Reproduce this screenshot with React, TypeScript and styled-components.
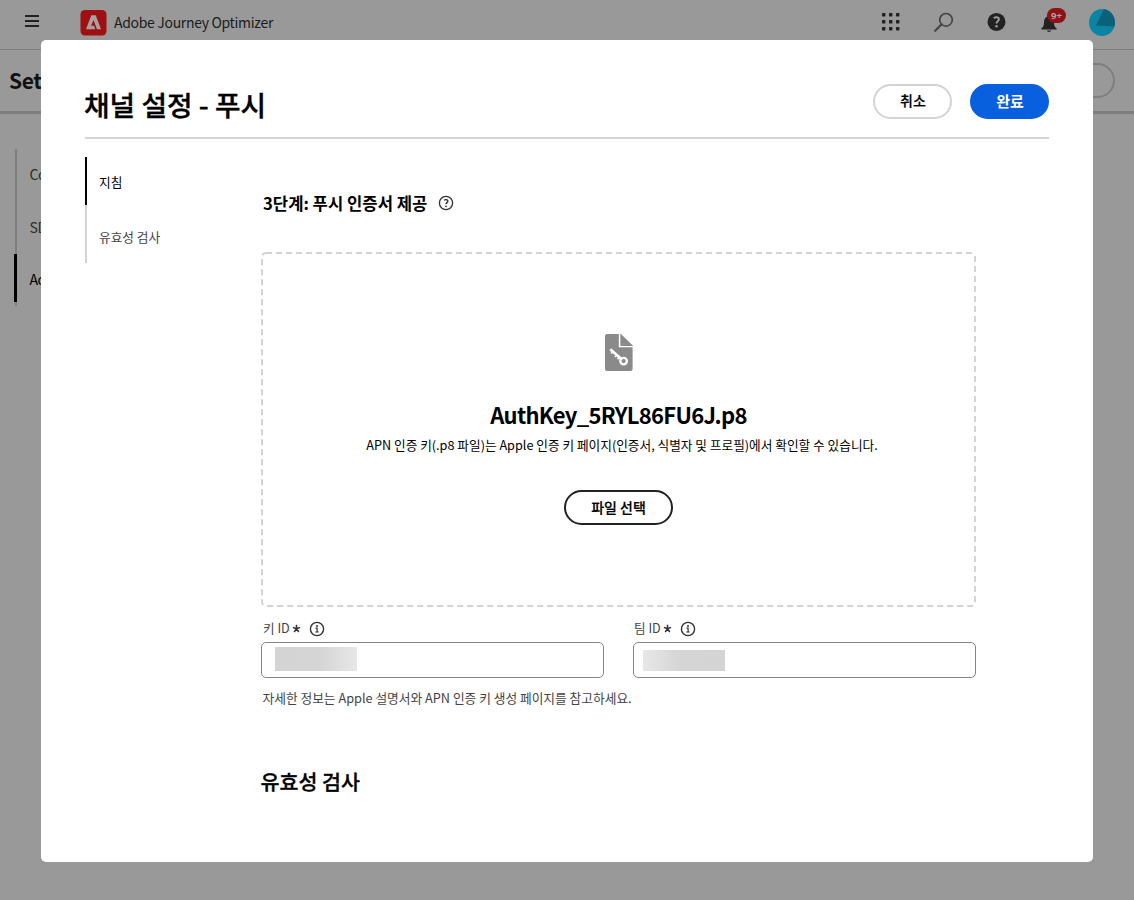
import React from "react";
import styled, { createGlobalStyle } from "styled-components";

const GlobalStyle = createGlobalStyle`
  * { box-sizing: border-box; }
  html, body, #root { height: 100%; }
  body {
    margin: 0;
    overflow: hidden;
    background: #999;
    font-family: "Noto Sans CJK KR", "Noto Sans", sans-serif;
  }
  h1, h2, h3, p { margin: 0; }
  svg { display: block; flex: none; }
  button { font-family: inherit; padding: 0; }
`;

const Page = styled.div`
  position: relative;
  width: 1134px;
  height: 900px;
  overflow: hidden;
  background: #999;
`;

const TopBar = styled.header`
  display: flex;
  align-items: flex-start;
  height: 50px;
  padding: 0 19px 0 25px;
  border-bottom: 1px solid #7d7d7d;
`;

const Slot = styled.div<{ $top: number; $left?: number }>`
  margin-top: ${(p) => p.$top}px;
  margin-left: ${(p) => p.$left ?? 0}px;
`;

const ProductName = styled.span`
  margin: 10px auto 0 7px;
  font-size: 14px;
  line-height: 24px;
  letter-spacing: -0.32px;
  color: #1c1c1c;
  white-space: nowrap;
`;

const Bell = styled.div`
  position: relative;
  margin: 15px 0 0 35px;
`;

const Badge = styled.span`
  position: absolute;
  left: 6px;
  top: -7px;
  width: 19px;
  height: 15px;
  border-radius: 8px;
  background: #8e1216;
  color: #b5a5a5;
  font-family: "Open Sans", sans-serif;
  font-size: 9.5px;
  font-weight: 700;
  line-height: 15px;
  text-align: center;
`;

const SubHeader = styled.div`
  display: flex;
  justify-content: space-between;
  height: 64px;
  padding: 13px 19px 0 9px;
  border-bottom: 3px solid #7e7e7e;
`;

const SubTitle = styled.h2`
  font-size: 21px;
  line-height: 34px;
  font-weight: 700;
  letter-spacing: -0.4px;
  color: #111;
`;

const GhostPill = styled.div`
  width: 80px;
  height: 35px;
  border: 2px solid #7e7e7e;
  border-radius: 18px;
`;

const SideNav = styled.nav`
  width: 100px;
  height: 157px;
  margin: 35px 0 0 14px;
  display: flex;
`;

const SideTrack = styled.div`
  width: 3px;
  display: flex;
  flex-direction: column;
  align-items: flex-end;
`;

const SideSegment = styled.i<{ $h: number; $active?: boolean }>`
  width: ${(p) => (p.$active ? 3 : 2)}px;
  height: ${(p) => p.$h}px;
  background: ${(p) => (p.$active ? "#000" : "#7e7e7e")};
`;

const SideItems = styled.div`
  padding: 0 0 0 12.5px;
`;

const SideItem = styled.div<{ $active?: boolean }>`
  height: 52.5px;
  line-height: 50px;
  font-size: 14px;
  letter-spacing: -0.4px;
  color: ${(p) => (p.$active ? "#000" : "#2b2b2b")};
`;

const Dialog = styled.section`
  position: absolute;
  left: 41px;
  top: 40px;
  width: 1052px;
  height: 822px;
  padding: 44px 44px 0;
  border-radius: 5px;
  background: #fff;
  color: #000;
`;

const DialogHeader = styled.header`
  display: flex;
  align-items: flex-start;
  height: 55px;
  border-bottom: 2px solid #d3d3d3;
`;

const Title = styled.h1`
  flex: 1;
  margin-left: -1px;
  font-size: 27.8px;
  line-height: 40px;
  font-weight: 500;
  -webkit-text-stroke: 0.35px #000;
`;

const Pill = styled.button<{ $w: number; $kind: "quiet" | "primary" | "outline"; $size: number }>`
  width: ${(p) => p.$w}px;
  height: 35px;
  border-radius: 18px;
  border: 2px solid
    ${(p) => (p.$kind === "primary" ? "#0860de" : p.$kind === "quiet" ? "#d3d3d3" : "#222")};
  background: ${(p) => (p.$kind === "primary" ? "#0860de" : "#fff")};
  color: ${(p) => (p.$kind === "primary" ? "#fff" : "#000")};
  font-size: ${(p) => p.$size}px;
  line-height: 29px;
  padding: 0 0 ${(p) => (p.$kind === "outline" ? 1 : 2)}px ${(p) => (p.$kind === "outline" ? 0 : 1)}px;
  font-weight: ${(p) => (p.$kind === "primary" ? 700 : 500)};
  -webkit-text-stroke: ${(p) => (p.$kind === "primary" ? 0 : 0.2)}px #000;
`;

const Actions = styled.div`
  display: flex;
  gap: 18px;
`;

const Body = styled.div`
  display: flex;
  padding-top: 18px;
`;

const Steps = styled.nav`
  width: 176px;
`;

const Step = styled.div<{ $active?: boolean; $h: number; $line: number }>`
  height: ${(p) => p.$h}px;
  padding-left: 12px;
  border-left: 2px solid ${(p) => (p.$active ? "#000" : "#d3d3d3")};
  color: ${(p) => (p.$active ? "#000" : "#444")};
  font-size: 12.7px;
  line-height: ${(p) => p.$line}px;
`;

const Content = styled.main`
  width: 715px;
`;

const StepHeading = styled.div`
  display: flex;
  align-items: flex-start;
  gap: 11px;
  padding: 33px 0 0 2px;
  height: 95px;
`;

const StepTitle = styled.h3`
  font-size: 16.65px;
  line-height: 26px;
  font-weight: 700;
`;

const DropFrame = styled.div`
  display: grid;
  width: 715px;
  height: 355px;
`;

const DropOutline = styled.svg`
  grid-area: 1 / 1;
`;

const DropContent = styled.div`
  grid-area: 1 / 1;
  display: flex;
  flex-direction: column;
  align-items: center;
  padding-top: 81px;
`;

const FileName = styled.h2`
  margin-top: 26px;
  font-size: 22px;
  line-height: 34px;
  font-weight: 700;
  letter-spacing: -0.72px;
  white-space: nowrap;
`;

const Hint = styled.p`
  margin: 4px 0 35px 7px;
  font-size: 12.68px;
  line-height: 20px;
  white-space: nowrap;
`;

const Fields = styled.div`
  display: flex;
  gap: 29px;
  padding-top: 11px;
`;

const Field = styled.div`
  width: 343px;
`;

const Label = styled.div<{ $left: number }>`
  display: flex;
  align-items: center;
  height: 20px;
  padding-left: ${(p) => p.$left}px;
  font-size: 12.6px;
  line-height: 20px;
  color: #444;
`;

const Required = styled.svg`
  margin: 0 8px 0 2px;
`;

const Input = styled.div<{ $left: number; $top: number }>`
  height: 36px;
  margin-top: 4px;
  padding: ${(p) => p.$top}px 0 0 ${(p) => p.$left}px;
  border: 1px solid #858585;
  border-radius: 5px;
`;

const Redaction = styled.div<{ $h: number; $flip?: boolean }>`
  width: 82px;
  height: ${(p) => p.$h}px;
  background: linear-gradient(
    ${(p) => (p.$flip ? "to left" : "to right")},
    #d4d4d4,
    #d5d5d5 55%,
    #e7e7e7
  );
`;

const Help = styled.p`
  margin: 10px 0 0 1.5px;
  font-size: 12.72px;
  line-height: 20px;
  color: #444;
  white-space: nowrap;
`;

const NextHeading = styled.h2`
  margin: 58px 0 0 -0.5px;
  font-size: 20.6px;
  line-height: 30px;
  font-weight: 500;
  -webkit-text-stroke: 0.3px #000;
`;

const Asterisk = () => (
  <Required width="9" height="9" viewBox="0 0 9 9">
    <path d="M4.5 4.7V.8M4.5 4.7L8.1 3.4M4.5 4.7L6.8 8M4.5 4.7L2.2 8M4.5 4.7L.9 3.4" stroke="#333" strokeWidth="1.5" fill="none" />
  </Required>
);

const InfoIcon = () => (
  <svg width="16" height="17" viewBox="0 0 16 17">
    <circle cx="8" cy="9" r="6.6" fill="none" stroke="#333" strokeWidth="1.4" />
    <circle cx="8" cy="5.9" r="1" fill="#333" />
    <path d="M6.5 8.2H8.1V12M6.3 12H9.7" fill="none" stroke="#333" strokeWidth="1.2" />
  </svg>
);

const HelpIcon = () => (
  <svg width="16" height="16" viewBox="0 0 16 16">
    <circle cx="8" cy="8" r="6.6" fill="none" stroke="#333" strokeWidth="1.3" />
    <path d="M6 5.3C7.5 4.2 10 4.5 9.9 6.3C9.9 7.5 8 7.8 8 9.3" fill="none" stroke="#333" strokeWidth="1.4" />
    <circle cx="8" cy="11.3" r=".9" fill="#333" />
  </svg>
);

const MenuIcon = () => (
  <svg width="14" height="12" viewBox="0 0 14 12">
    <path d="M0 1.1H14M0 6H14M0 10.9H14" stroke="#222" strokeWidth="2" />
  </svg>
);

const AdobeLogo = () => (
  <svg width="27" height="26" viewBox="0 0 27 26">
    <rect x=".5" width="26" height="25.5" rx="4.5" fill="#a01013" />
    <path d="M11.3 5.2H15.7L21 19.2H17L13.5 9.9L11.1 15.7H14L15.2 19.2H6Z" fill="#a9a0a0" />
  </svg>
);

const AppsIcon = () => (
  <svg width="18" height="18" viewBox="0 0 18 18" fill="#222">
    {[0, 7, 14].map((y) => [0, 7, 14].map((x) => <rect key={`${x}-${y}`} x={x} y={y} width="3.4" height="3.4" rx=".6" />))}
  </svg>
);

const SearchIcon = () => (
  <svg width="20" height="20" viewBox="0 0 20 20" fill="none" stroke="#444" strokeWidth="1.7">
    <circle cx="12" cy="7.8" r="6.3" />
    <path d="M7.6 12.3L1.2 18.7" strokeWidth="2.2" strokeLinecap="round" />
  </svg>
);

const HelpSolidIcon = () => (
  <svg width="19" height="19" viewBox="0 0 19 19">
    <circle cx="9.5" cy="9.9" r="9" fill="#222" />
    <path d="M6.8 6.2C8.5 4.7 12 4.9 11.9 7.5C11.8 9.3 9.5 9.5 9.5 11.5" fill="none" stroke="#999" strokeWidth="2" />
    <circle cx="9.5" cy="14.3" r="1.3" fill="#999" />
  </svg>
);

const BellIcon = () => (
  <svg width="16" height="18" viewBox="0 0 16 18" fill="#222">
    <path d="M8 0C9 0 9.5.8 9.5 1.6C12 2.4 13 4.6 13 7.5C13 11 14 12.3 15.6 13.3V14.6H.4V13.3C2 12.3 3 11 3 7.5C3 4.6 4 2.4 6.5 1.6C6.5.8 7 0 8 0Z" />
    <path d="M5.9 15.5H10.1C9.9 17.4 6.1 17.4 5.9 15.5Z" />
  </svg>
);

const Avatar = () => (
  <svg width="26" height="27" viewBox="0 0 26 27">
    <clipPath id="avatar-clip"><ellipse cx="13" cy="13.5" rx="13" ry="13.5" /></clipPath>
    <g clipPath="url(#avatar-clip)">
      <rect width="26" height="27" fill="#0b84a4" />
      <path d="M15.5 -1L7 16.5L26 17.5V0Z" fill="#0a6178" />
    </g>
  </svg>
);

const KeyFileIcon = () => (
  <svg width="30" height="38" viewBox="0 0 30 38">
    <path d="M1 3Q1 1 3 1H14.8V14.2H28.6V36Q28.6 38 26.6 38H3Q1 38 1 36Z" fill="#8a8a8a" />
    <path d="M16.4 .6L29.3 12.9H16.4Z" fill="#8a8a8a" />
    <circle cx="19.6" cy="28.1" r="3.3" fill="none" stroke="#fff" strokeWidth="2.3" />
    <path d="M6.3 16.3L17 25.8" stroke="#fff" strokeWidth="2.7" />
    <path d="M9 18.5L7.2 20.5M12.8 22L10.9 24M15.2 24.2L13.5 26.2" stroke="#fff" strokeWidth="1.8" />
  </svg>
);

export default function App() {
  return (
    <Page>
      <GlobalStyle />
      <TopBar>
        <Slot $top={15}><MenuIcon /></Slot>
        <Slot $top={10} $left={41}><AdobeLogo /></Slot>
        <ProductName>Adobe Journey Optimizer</ProductName>
        <Slot $top={13}><AppsIcon /></Slot>
        <Slot $top={12} $left={34}><SearchIcon /></Slot>
        <Slot $top={12} $left={33}><HelpSolidIcon /></Slot>
        <Bell>
          <BellIcon />
          <Badge>9+</Badge>
        </Bell>
        <Slot $top={9} $left={32}><Avatar /></Slot>
      </TopBar>
      <SubHeader>
        <SubTitle>Settings</SubTitle>
        <GhostPill />
      </SubHeader>
      <SideNav>
        <SideTrack>
          <SideSegment $h={105} />
          <SideSegment $h={48} $active />
          <SideSegment $h={4} />
        </SideTrack>
        <SideItems>
          <SideItem>Config</SideItem>
          <SideItem>SDK</SideItem>
          <SideItem $active>Add</SideItem>
        </SideItems>
      </SideNav>

      <Dialog>
        <DialogHeader>
          <Title>채널 설정 - 푸시</Title>
          <Actions>
            <Pill $w={79} $kind="quiet" $size={14}>취소</Pill>
            <Pill $w={79} $kind="primary" $size={15}>완료</Pill>
          </Actions>
        </DialogHeader>
        <Body>
          <Steps>
            <Step $active $h={48} $line={50}>지침</Step>
            <Step $h={58} $line={64}>유효성 검사</Step>
          </Steps>
          <Content>
            <StepHeading>
              <StepTitle>3단계: 푸시 인증서 제공</StepTitle>
              <Slot $top={5}><HelpIcon /></Slot>
            </StepHeading>
            <DropFrame>
              <DropOutline width="715" height="355">
                <rect x="1" y="1" width="713" height="353" rx="4" fill="none" stroke="#d3d3d3" strokeWidth="2" strokeDasharray="6 4" />
              </DropOutline>
              <DropContent>
                <KeyFileIcon />
                <FileName>AuthKey_5RYL86FU6J.p8</FileName>
                <Hint>APN 인증 키(.p8 파일)는 Apple 인증 키 페이지(인증서, 식별자 및 프로필)에서 확인할 수 있습니다.</Hint>
                <Pill $w={109} $kind="outline" $size={14}>파일 선택</Pill>
              </DropContent>
            </DropFrame>
            <Fields>
              <Field>
                <Label $left={2}>키 ID<Asterisk /><InfoIcon /></Label>
                <Input $left={13} $top={4}><Redaction $h={24} /></Input>
              </Field>
              <Field>
                <Label $left={1}>팀 ID<Asterisk /><InfoIcon /></Label>
                <Input $left={9} $top={7}><Redaction $h={21} $flip /></Input>
              </Field>
            </Fields>
            <Help>자세한 정보는 Apple 설명서와 APN 인증 키 생성 페이지를 참고하세요.</Help>
            <NextHeading>유효성 검사</NextHeading>
          </Content>
        </Body>
      </Dialog>
    </Page>
  );
}
